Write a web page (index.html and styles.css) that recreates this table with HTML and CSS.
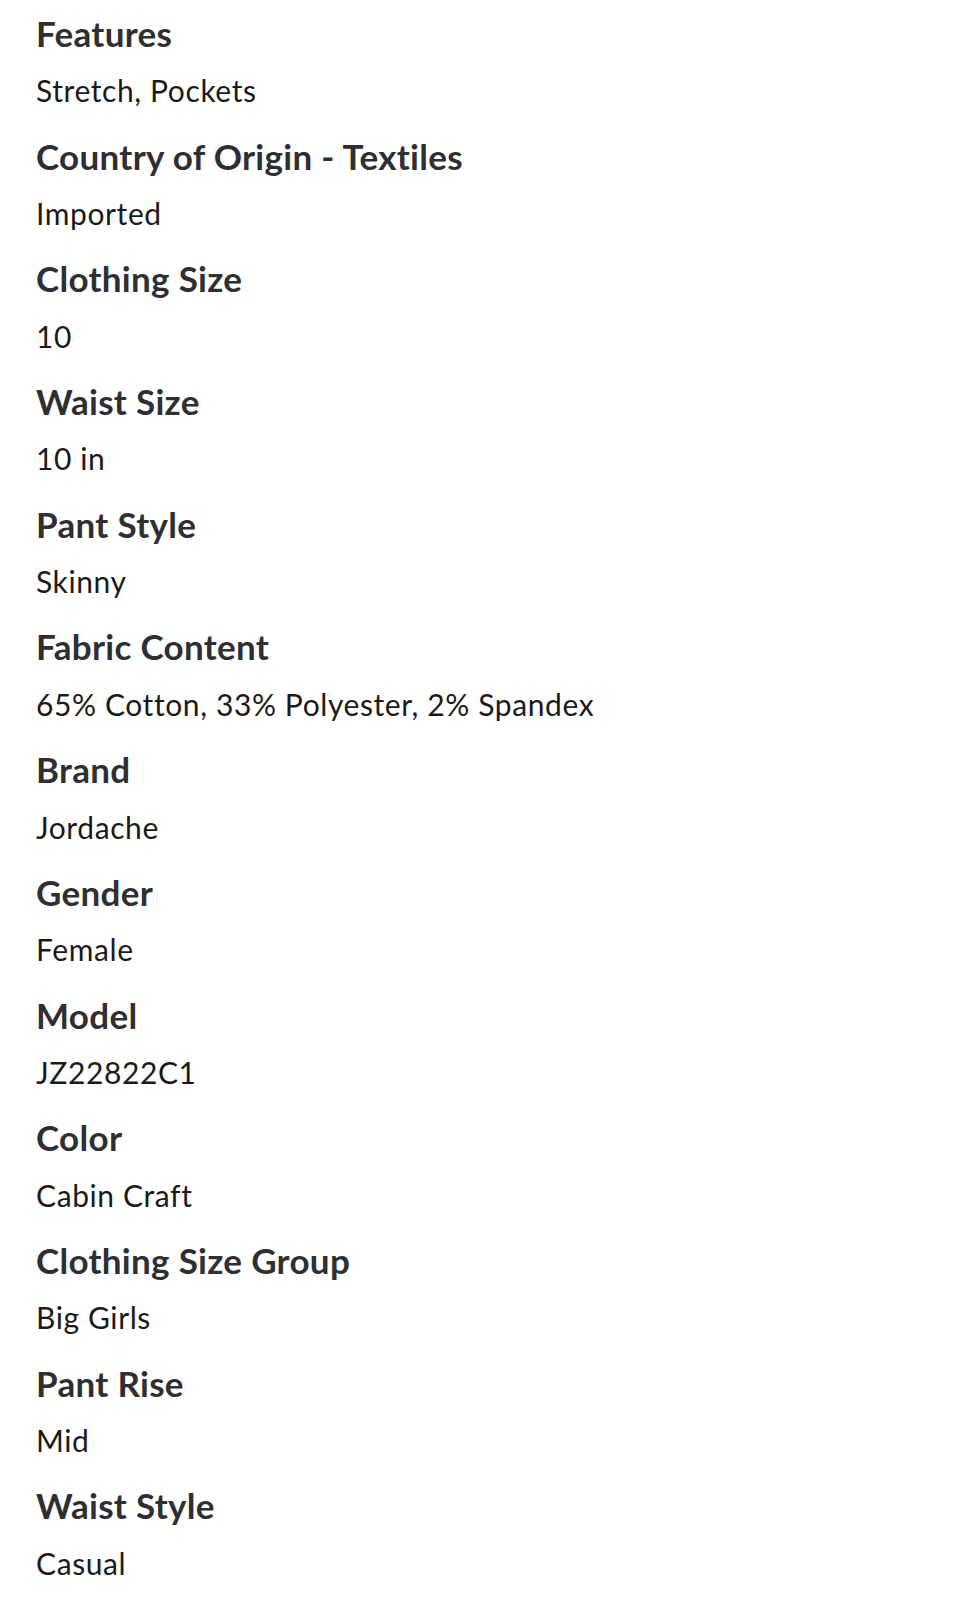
FILE: index.html
```html
<!DOCTYPE html>
<html lang="en">

<head>
    <meta charset="UTF-8">
    <meta name="viewport" content="width=device-width, initial-scale=1.0">
    <title>Specifications</title>
    <link rel="stylesheet" href="styles.css">
</head>

<body>
    <div class="specs">
        <div class="spec">
            <h3>Features</h3>
            <p>Stretch, Pockets</p>
        </div>
        <div class="spec">
            <h3>Country of Origin - Textiles</h3>
            <p>Imported</p>
        </div>
        <div class="spec">
            <h3>Clothing Size</h3>
            <p>10</p>
        </div>
        <div class="spec">
            <h3>Waist Size</h3>
            <p>10 in</p>
        </div>
        <div class="spec">
            <h3>Pant Style</h3>
            <p>Skinny</p>
        </div>
        <div class="spec">
            <h3>Fabric Content</h3>
            <p>65% Cotton, 33% Polyester, 2% Spandex</p>
        </div>
        <div class="spec">
            <h3>Brand</h3>
            <p>Jordache</p>
        </div>
        <div class="spec">
            <h3>Gender</h3>
            <p>Female</p>
        </div>
        <div class="spec">
            <h3>Model</h3>
            <p>JZ22822C1</p>
        </div>
        <div class="spec">
            <h3>Color</h3>
            <p>Cabin Craft</p>
        </div>
        <div class="spec">
            <h3>Clothing Size Group</h3>
            <p>Big Girls</p>
        </div>
        <div class="spec">
            <h3>Pant Rise</h3>
            <p>Mid</p>
        </div>
        <div class="spec">
            <h3>Waist Style</h3>
            <p>Casual</p>
        </div>
    </div>
</body>

</html>
```

FILE: styles.css
```css
body {
    font-family: Lato, "Open Sans", sans-serif;
    background-color: #fff;
    color: #2e2f32;
    margin: 0;
    padding: 0;
}

.specs {
    padding: 9px 36px 0;
}

.spec h3 {
    margin: 0 0 11.4px;
    font-size: 35px;
    line-height: 49px;
    font-weight: 700;
    letter-spacing: 0.3px;
    color: #2e2f32;
}

.spec p {
    margin: 0 0 20.3px;
    font-size: 30px;
    line-height: 42px;
    letter-spacing: 0.6px;
    color: #1a1a1a;
}
```
